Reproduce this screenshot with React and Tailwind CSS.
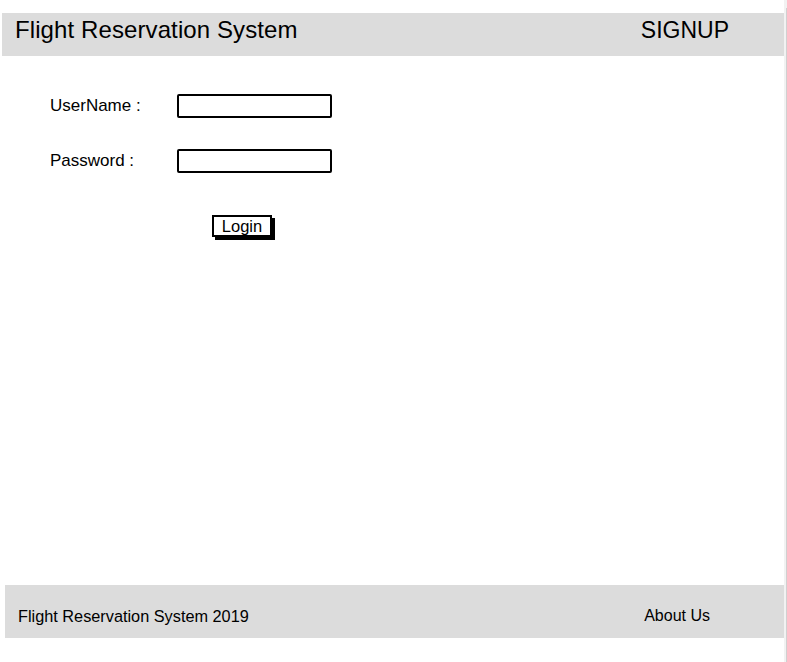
export default function App() {
  return (
    <div
      className="flex w-[787px] h-[662px] bg-white text-black overflow-hidden"
      style={{ fontFamily: '"Liberation Sans", Arial, sans-serif' }}
    >
      <div className="flex flex-col w-[784px] h-full">
        {/* Header */}
        <header className="mt-[13px] ml-[2px] w-[782px] h-[43px] bg-[#dcdcdc] flex items-start pt-[5px]">
          <h1 className="ml-[13px] text-[24px] leading-[24px] tracking-[0.1px]">
            Flight Reservation System
          </h1>
          <a className="ml-auto mr-[55px] text-[23px] leading-[24px]">SIGNUP</a>
        </header>

        {/* Login form */}
        <main className="flex-1 pt-[38px] pl-[50px]">
          <div className="flex items-center h-[24px]">
            <label className="w-[127px] text-[17px]">UserName :</label>
            <input
              type="text"
              className="w-[155px] h-[24px] border-2 border-black rounded-[2px] bg-white outline-none"
            />
          </div>
          <div className="flex items-center h-[24px] mt-[31px]">
            <label className="w-[127px] text-[17px]">Password :</label>
            <input
              type="password"
              className="w-[155px] h-[24px] border-2 border-black rounded-[2px] bg-white outline-none"
            />
          </div>
          <div className="mt-[42px] ml-[162px]">
            <button className="w-[60px] h-[22px] border-2 border-black bg-white text-[16.5px] leading-none shadow-[3px_3px_0_#000]">
              Login
            </button>
          </div>
        </main>

        {/* Footer */}
        <footer className="ml-[5px] w-[779px] h-[53px] mb-[24px] bg-[#dcdcdc] flex items-center pt-[9px]">
          <span className="ml-[13px] text-[16.3px]">Flight Reservation System 2019</span>
          <span className="ml-auto mr-[74px] text-[16px]">About Us</span>
        </footer>
      </div>

      {/* right edge strip */}
      <div className="w-[3px] h-full bg-[#f2f2f2] flex justify-end">
        <div className="w-px mt-[8px] bg-[#d0d0d0]" />
      </div>
    </div>
  );
}
